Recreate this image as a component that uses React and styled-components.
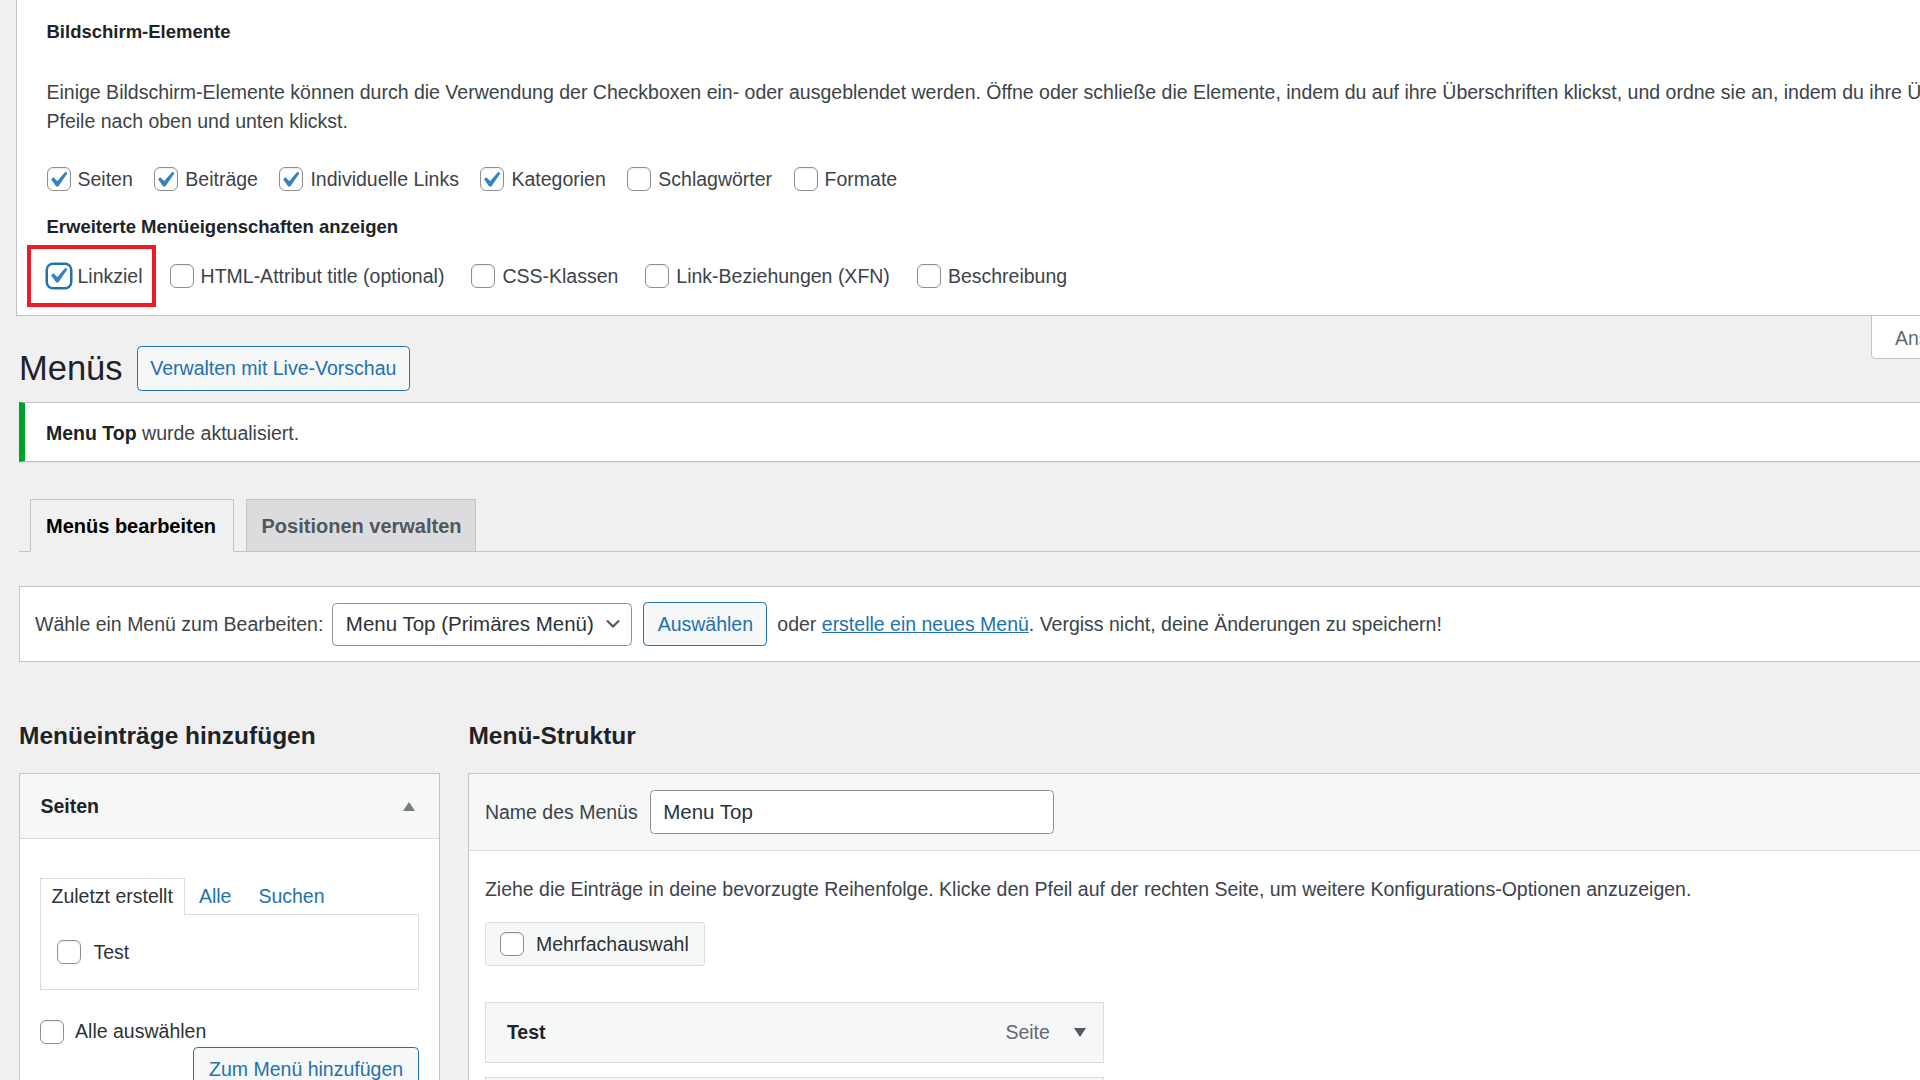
import React from "react";
import styled, { createGlobalStyle } from "styled-components";

const GlobalStyle = createGlobalStyle`
  html, body {
    margin: 0;
    padding: 0;
    overflow: hidden;
    background: #f0f0f1;
  }
  body {
    font-family: "Liberation Sans", Arial, sans-serif;
    font-size: 19.5px;
    color: #3c434a;
  }
  * {
    box-sizing: border-box;
  }
`;

const Page = styled.div`
  width: 2100px;
  min-height: 1080px;
  padding-left: 16px;
`;

/* ---------- screen options ---------- */

const ScreenMeta = styled.div`
  background: #fff;
  border-left: 1.5px solid #c3c4c7;
  border-bottom: 1.5px solid #c3c4c7;
  padding: 18px 30px 24px 29.5px;
`;

const Legend = styled.div`
  font-size: 18.5px;
  font-weight: 700;
  line-height: 28px;
  color: #1d2327;
  margin-top: ${p => p.$top || 0}px;
`;

const Description = styled.p`
  margin: 31.5px 0 0;
  line-height: 29px;
  white-space: nowrap;
`;

const OptionRow = styled.div`
  display: flex;
  align-items: center;
  height: 30px;
  margin-top: ${p => p.$top}px;
`;

const Option = styled.label`
  position: relative;
  display: flex;
  align-items: center;
  margin-right: ${p => p.$space}px;
  line-height: 30px;
  white-space: nowrap;
`;

const Highlight = styled.span`
  position: absolute;
  left: -19.7px;
  top: -16px;
  width: 129.4px;
  height: 62.4px;
  border: 4.3px solid #ed1c24;
  pointer-events: none;
`;

const Box = styled.span`
  position: relative;
  flex: none;
  width: 24px;
  height: 24px;
  background: #fff;
  border: 1.5px solid ${p => (p.$focus ? "#2271b1" : "#8c8f94")};
  border-radius: 6px;
  box-shadow: ${p => (p.$focus ? "0 0 0 1.5px #2271b1" : "inset 0 1px 2px rgba(0,0,0,0.08)")};
  margin-right: ${p => p.$gap}px;

  svg {
    position: absolute;
    left: -6px;
    top: -4.5px;
    width: 31.5px;
    height: 31.5px;
  }
`;

const Checkbox = ({ checked, focus, gap = 7 }) => (
  <Box $focus={focus} $gap={gap}>
    {checked && (
      <svg viewBox="0 0 20 20">
        <path
          d="M14.83 4.89l1.34.94-5.81 8.38H9.02L5.78 9.67l1.34-1.25 2.57 2.4z"
          fill="#3582c4"
        />
      </svg>
    )}
  </Box>
);

/* ---------- title area ---------- */

const Wrap = styled.div`
  margin: 0 30px 0 3px;
`;

const TitleRow = styled.div`
  display: flex;
  align-items: flex-start;
  height: 75px;
`;

const TitleGroup = styled.div`
  display: flex;
  align-items: center;
  gap: 14px;
  margin-top: 30px;
`;

const H1 = styled.h1`
  margin: 0;
  font-size: 34.5px;
  font-weight: 400;
  line-height: 45px;
  color: #1d2327;
`;

const Button = styled.span`
  display: inline-flex;
  align-items: center;
  justify-content: center;
  flex: none;
  width: ${p => p.$w}px;
  height: ${p => p.$h || 45}px;
  background: #f6f7f7;
  border: 1.5px solid #2271b1;
  border-radius: 4.5px;
  color: #2271b1;
  font-size: 19.5px;
  white-space: nowrap;
  margin-left: ${p => p.$ml || 0}px;
`;

const MetaTab = styled.div`
  margin-left: auto;
  width: 199px;
  height: 43px;
  display: flex;
  align-items: center;
  gap: 8px;
  padding: 3px 0 0 23px;
  background: #fff;
  border: 1.5px solid #c3c4c7;
  border-top: none;
  border-radius: 0 0 4.5px 4.5px;
  color: #646970;
  white-space: nowrap;
`;

const Notice = styled.div`
  margin-top: 11px;
  background: #fff;
  border: 1.5px solid #c3c4c7;
  border-left: 6px solid #00a32a;
  box-shadow: 0 1px 1px rgba(0, 0, 0, 0.04);
  padding: 16px 21px 13px;
  line-height: 29px;

  strong {
    color: #1d2327;
  }
`;

const NavTabs = styled.div`
  display: flex;
  align-items: flex-end;
  gap: 12px;
  margin-top: 37px;
  padding-left: 11px;
  border-bottom: 1.5px solid #c3c4c7;
`;

const NavTab = styled.div`
  width: ${p => p.$w}px;
  height: 53.5px;
  margin-bottom: -1.5px;
  display: flex;
  align-items: center;
  padding: 3px 0 0 15px;
  border: 1.5px solid #c3c4c7;
  border-bottom-color: ${p => (p.$active ? "#f0f0f1" : "#c3c4c7")};
  background: ${p => (p.$active ? "#f0f0f1" : "#dcdcde")};
  color: ${p => (p.$active ? "#000" : "#50575e")};
  font-size: 20px;
  font-weight: 700;
  white-space: nowrap;
`;

const ManageBox = styled.div`
  margin-top: 34.5px;
  height: 76px;
  display: flex;
  align-items: center;
  padding-left: 15px;
  background: #fff;
  border: 1.5px solid #c3c4c7;
  white-space: nowrap;
`;

const FakeSelect = styled.div`
  width: 300px;
  height: 43px;
  margin-left: 9px;
  display: flex;
  align-items: center;
  padding: 0 8px 0 12.5px;
  background: #fff;
  border: 1.5px solid #8c8f94;
  border-radius: 4.5px;
  color: #2c3338;
  font-size: 20.5px;

  svg {
    margin-left: auto;
    width: 20px;
    height: 20px;
  }
`;

const Link = styled.a`
  color: #2271b1;
  text-decoration: underline;
`;

const Hint = styled.span`
  margin-left: 10px;
`;

/* ---------- columns ---------- */

const Columns = styled.div`
  display: flex;
  gap: 28px;
  margin-top: 56px;
`;

const Column = styled.div`
  width: ${p => (p.$w ? `${p.$w}px` : "auto")};
  flex: ${p => (p.$w ? "none" : "1")};
`;

const H2 = styled.h2`
  margin: 0 0 20px;
  font-size: 24.5px;
  font-weight: 700;
  line-height: 35px;
  color: #1d2327;
`;

const Panel = styled.div`
  background: #fff;
  border: 1.5px solid #c3c4c7;
  border-right: ${p => (p.$open ? "none" : "1.5px solid #c3c4c7")};
`;

const PanelHead = styled.div`
  height: ${p => p.$h}px;
  display: flex;
  align-items: center;
  justify-content: space-between;
  padding: 0 24px 0 ${p => p.$pl}px;
  background: #f6f7f7;
  border-bottom: 1.5px solid #dcdcde;
`;

const HeadTitle = styled.span`
  font-weight: 700;
  color: #1d2327;
`;

const PanelBody = styled.div`
  padding: ${p => p.$pad};
`;

const TabList = styled.div`
  display: flex;
  align-items: flex-end;
`;

const SmallTab = styled.div`
  height: ${p => (p.$active ? "37.5px" : "36px")};
  margin-bottom: ${p => (p.$active ? "-1.5px" : "0")};
  display: flex;
  align-items: center;
  padding: 0 ${p => (p.$active ? "11px" : "13px")};
  margin-left: ${p => (p.$active ? 0 : 1)}px;
  background: ${p => (p.$active ? "#fff" : "transparent")};
  border: ${p => (p.$active ? "1.5px solid #dcdcde" : "none")};
  border-bottom-color: #fff;
  color: ${p => (p.$active ? "#2c3338" : "#2271b1")};
  white-space: nowrap;
`;

const TabPanel = styled.div`
  height: 76px;
  display: flex;
  align-items: center;
  padding-left: 16.5px;
  border: 1.5px solid #dcdcde;
  color: #2c3338;
`;

const CheckLine = styled.div`
  display: flex;
  align-items: center;
  height: 30px;
  margin-top: ${p => p.$top || 0}px;
  color: #2c3338;
`;

const ButtonRow = styled.div`
  display: flex;
  justify-content: flex-end;
`;

const NameRow = styled.div`
  display: flex;
  align-items: center;
  white-space: nowrap;
`;

const TextInput = styled.div`
  width: 404px;
  height: 44px;
  margin-left: 12.5px;
  display: flex;
  align-items: center;
  padding-left: 12px;
  background: #fff;
  border: 1.5px solid #8c8f94;
  border-radius: 4.5px;
  color: #2c3338;
  font-size: 20.5px;
`;

const Drag = styled.p`
  margin: 0;
  line-height: 29px;
  white-space: nowrap;
`;

const BulkBox = styled.div`
  display: inline-flex;
  align-items: center;
  height: 44.4px;
  margin-top: 18.5px;
  padding: 0 15px 0 14px;
  background: #f6f7f7;
  border: 1.5px solid #dcdcde;
  border-radius: 3px;
  color: #2c3338;
`;

const MenuItem = styled.div`
  width: 619px;
  height: 60.6px;
  margin-top: ${p => p.$top}px;
  display: flex;
  align-items: center;
  padding: 0 17px 0 21px;
  background: #f6f7f7;
  border: 1.5px solid #dcdcde;
`;

const ItemTitle = styled.span`
  font-weight: 700;
  color: #1d2327;
`;

const ItemType = styled.span`
  margin-left: auto;
  margin-right: 24px;
  color: #646970;
`;

const Triangle = ({ up, color }) => (
  <svg width="12" height="9" viewBox="0 0 12 9">
    <polygon points={up ? "0,9 6,0 12,9" : "0,0 12,0 6,9"} fill={color} />
  </svg>
);

const Chevron = () => (
  <svg viewBox="0 0 20 20">
    <path d="M5 6l5 5 5-5 2 1-7 7-7-7 2-1z" fill="#50575e" />
  </svg>
);

const screenItems = [
  { label: "Seiten", checked: true },
  { label: "Beiträge", checked: true },
  { label: "Individuelle Links", checked: true },
  { label: "Kategorien", checked: true },
  { label: "Schlagwörter", checked: false },
  { label: "Formate", checked: false },
];

const advancedItems = [
  { label: "Linkziel", checked: true, focus: true },
  { label: "HTML-Attribut title (optional)" },
  { label: "CSS-Klassen" },
  { label: "Link-Beziehungen (XFN)" },
  { label: "Beschreibung" },
];

export default function App() {
  return (
    <>
      <GlobalStyle />
      <Page>
        <ScreenMeta>
          <Legend>Bildschirm-Elemente</Legend>
          <Description>
            Einige Bildschirm-Elemente können durch die Verwendung der Checkboxen ein- oder
            ausgeblendet werden. Öffne oder schließe die Elemente, indem du auf ihre Überschriften
            klickst, und ordne sie an, indem du ihre Überschriften oder die
            <br />
            Pfeile nach oben und unten klickst.
          </Description>
          <OptionRow $top={28.5}>
            {screenItems.map(item => (
              <Option key={item.label} $space={21.5}>
                <Checkbox checked={item.checked} />
                {item.label}
              </Option>
            ))}
          </OptionRow>
          <Legend $top={18.5}>Erweiterte Menüeigenschaften anzeigen</Legend>
          <OptionRow $top={20}>
            {advancedItems.map(item => (
              <Option key={item.label} $space={27}>
                <Checkbox checked={item.checked} focus={item.focus} />
                {item.label}
                {item.focus && <Highlight />}
              </Option>
            ))}
          </OptionRow>
        </ScreenMeta>

        <Wrap>
          <TitleRow>
            <TitleGroup>
              <H1>Menüs</H1>
              <Button $w={273.5}>Verwalten mit Live-Vorschau</Button>
            </TitleGroup>
            <MetaTab>
              Ansicht anpassen
              <Triangle color="#787c82" />
            </MetaTab>
          </TitleRow>

          <Notice>
            <strong>Menu Top</strong> wurde aktualisiert.
          </Notice>

          <NavTabs>
            <NavTab $active $w={203.5}>Menüs bearbeiten</NavTab>
            <NavTab $w={230.4}>Positionen verwalten</NavTab>
          </NavTabs>

          <ManageBox>
            Wähle ein Menü zum Bearbeiten:
            <FakeSelect>
              Menu Top (Primäres Menü)
              <Chevron />
            </FakeSelect>
            <Button $w={124} $h={44} $ml={11}>Auswählen</Button>
            <Hint>
              oder <Link>erstelle ein neues Menü</Link>. Vergiss nicht, deine Änderungen zu
              speichern!
            </Hint>
          </ManageBox>

          <Columns>
            <Column $w={421.4}>
              <H2>Menüeinträge hinzufügen</H2>
              <Panel>
                <PanelHead $h={65} $pl={20.5}>
                  <HeadTitle>Seiten</HeadTitle>
                  <Triangle up color="#787c82" />
                </PanelHead>
                <PanelBody $pad="39px 20px 40px 19.5px">
                  <TabList>
                    <SmallTab $active>Zuletzt erstellt</SmallTab>
                    <SmallTab>Alle</SmallTab>
                    <SmallTab>Suchen</SmallTab>
                  </TabList>
                  <TabPanel>
                    <Checkbox gap={12.5} />
                    Test
                  </TabPanel>
                  <CheckLine $top={26.7}>
                    <Checkbox gap={11.6} />
                    Alle auswählen
                  </CheckLine>
                  <ButtonRow>
                    <Button $w={226.6}>Zum Menü hinzufügen</Button>
                  </ButtonRow>
                </PanelBody>
              </Panel>
            </Column>

            <Column>
              <H2>Menü-Struktur</H2>
              <Panel $open>
                <PanelHead $h={77} $pl={15.5}>
                  <NameRow>
                    Name des Menüs
                    <TextInput>Menu Top</TextInput>
                  </NameRow>
                </PanelHead>
                <PanelBody $pad="23.5px 0 40px 15.5px">
                  <Drag>
                    Ziehe die Einträge in deine bevorzugte Reihenfolge. Klicke den Pfeil auf der
                    rechten Seite, um weitere Konfigurations-Optionen anzuzeigen.
                  </Drag>
                  <BulkBox>
                    <Checkbox gap={12} />
                    Mehrfachauswahl
                  </BulkBox>
                  <MenuItem $top={36}>
                    <ItemTitle>Test</ItemTitle>
                    <ItemType>Seite</ItemType>
                    <Triangle color="#50575e" />
                  </MenuItem>
                  <MenuItem $top={14}>
                    <ItemTitle>Beispiel-Seite</ItemTitle>
                    <ItemType>Seite</ItemType>
                    <Triangle color="#50575e" />
                  </MenuItem>
                </PanelBody>
              </Panel>
            </Column>
          </Columns>
        </Wrap>
      </Page>
    </>
  );
}
